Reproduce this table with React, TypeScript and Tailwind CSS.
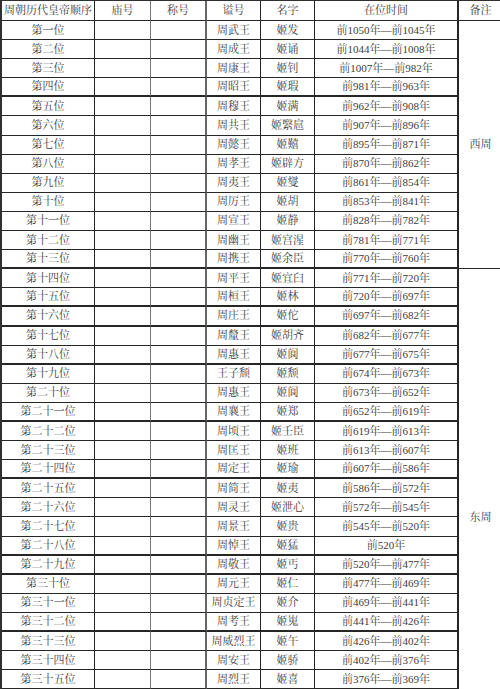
import React from 'react';

type Row = [string, string, string, string];

const rows: Row[] = [
    ['第一位', '周武王', '姬发', '前1050年—前1045年'],
    ['第二位', '周成王', '姬诵', '前1044年—前1008年'],
    ['第三位', '周康王', '姬钊', '前1007年—前982年'],
    ['第四位', '周昭王', '姬瑕', '前981年—前963年'],
    ['第五位', '周穆王', '姬满', '前962年—前908年'],
    ['第六位', '周共王', '姬繄扈', '前907年—前896年'],
    ['第七位', '周懿王', '姬囏', '前895年—前871年'],
    ['第八位', '周孝王', '姬辟方', '前870年—前862年'],
    ['第九位', '周夷王', '姬燮', '前861年—前854年'],
    ['第十位', '周厉王', '姬胡', '前853年—前841年'],
    ['第十一位', '周宣王', '姬静', '前828年—前782年'],
    ['第十二位', '周幽王', '姬宫湦', '前781年—前771年'],
    ['第十三位', '周携王', '姬余臣', '前770年—前760年'],
    ['第十四位', '周平王', '姬宜臼', '前771年—前720年'],
    ['第十五位', '周桓王', '姬林', '前720年—前697年'],
    ['第十六位', '周庄王', '姬佗', '前697年—前682年'],
    ['第十七位', '周釐王', '姬胡齐', '前682年—前677年'],
    ['第十八位', '周惠王', '姬阆', '前677年—前675年'],
    ['第十九位', '王子颓', '姬颓', '前674年—前673年'],
    ['第二十位', '周惠王', '姬阆', '前673年—前652年'],
    ['第二十一位', '周襄王', '姬郑', '前652年—前619年'],
    ['第二十二位', '周顷王', '姬壬臣', '前619年—前613年'],
    ['第二十三位', '周匡王', '姬班', '前613年—前607年'],
    ['第二十四位', '周定王', '姬瑜', '前607年—前586年'],
    ['第二十五位', '周简王', '姬夷', '前586年—前572年'],
    ['第二十六位', '周灵王', '姬泄心', '前572年—前545年'],
    ['第二十七位', '周景王', '姬贵', '前545年—前520年'],
    ['第二十八位', '周悼王', '姬猛', '前520年'],
    ['第二十九位', '周敬王', '姬丐', '前520年—前477年'],
    ['第三十位', '周元王', '姬仁', '前477年—前469年'],
    ['第三十一位', '周贞定王', '姬介', '前469年—前441年'],
    ['第三十二位', '周考王', '姬嵬', '前441年—前426年'],
    ['第三十三位', '周威烈王', '姬午', '前426年—前402年'],
    ['第三十四位', '周安王', '姬骄', '前402年—前376年'],
    ['第三十五位', '周烈王', '姬喜', '前376年—前369年'],
];

// rows whose bottom rule looks heavier in the scan
const thick = new Set([4, 13, 15, 16, 18, 21, 24, 28, 29, 32]);

const cell = 'flex items-center justify-center whitespace-nowrap border-b border-r border-[#262626]';

export default function App() {
    return (
        <div className="h-[689px] w-[500px] overflow-hidden bg-white">
            <div className="grid grid-cols-[93px_56px_56px_54px_54px_144px_43px] grid-rows-[20px_repeat(35,19.1px)] border-l-2 border-t border-[#303030] pl-0 font-['Liberation_Serif','Noto_Serif_CJK_SC','Noto_Sans_CJK_SC',serif] text-[11px] leading-none text-[#3c3c3c]">
                <div className={cell}>周朝历代皇帝顺序</div>
                <div className={`${cell} border-r-[#777]`}>庙号</div>
                <div className={`${cell} border-r-2 border-r-[#666]`}>称号</div>
                <div className={cell}>谥号</div>
                <div className={cell}>名字</div>
                <div className={`${cell} border-r-2`}>在位时间</div>
                <div className="flex items-center justify-center border-b border-[#262626]">备注</div>

                {rows.map((r, i) => {
                    const n = i + 1;
                    const b = thick.has(n) ? 'border-b-2' : '';
                    return (
                        <React.Fragment key={n}>
                            <div className={`${cell} ${b}`}>{r[0]}</div>
                            <div className={`${cell} ${b} border-r-[#777]`} />
                            <div className={`${cell} ${b} border-r-2 border-r-[#666]`} />
                            <div className={`${cell} ${b}`}>{r[1]}</div>
                            <div className={`${cell} ${b}`}>{r[2]}</div>
                            <div className={`${cell} ${b} border-r-2`}>{r[3]}</div>
                            {n === 1 && (
                                <div className="row-span-[13] flex items-center justify-center border-b border-[#262626]">
                                    西周
                                </div>
                            )}
                            {n === 14 && (
                                <div className="row-span-[22] flex justify-center pt-[243px]">东周</div>
                            )}
                        </React.Fragment>
                    );
                })}
            </div>
        </div>
    );
}
